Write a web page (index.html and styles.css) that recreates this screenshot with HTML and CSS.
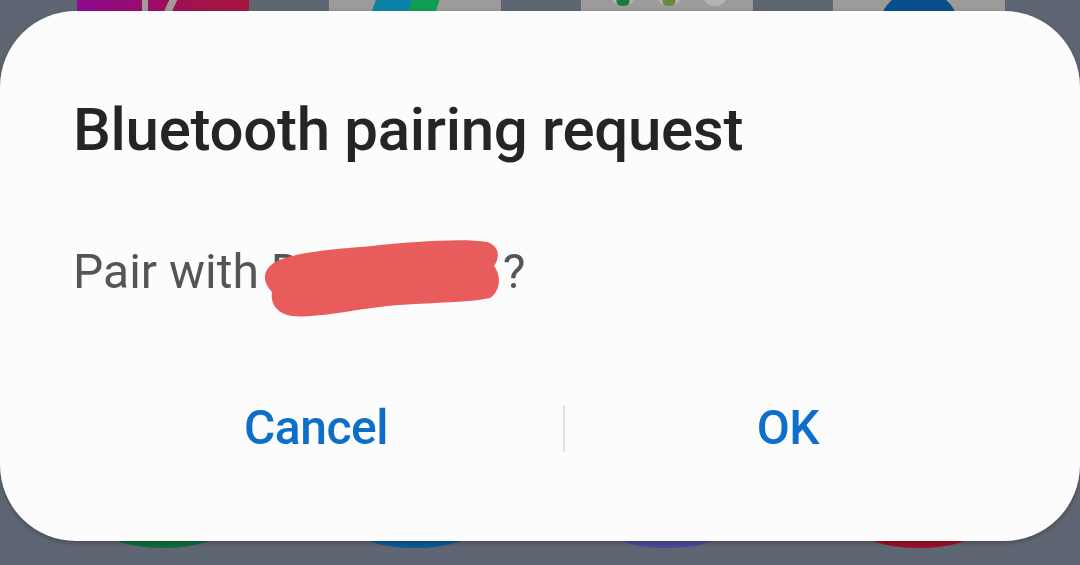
FILE: index.html
```html
<!DOCTYPE html>
<html lang="en">
<head>
    <meta charset="UTF-8">
    <meta name="viewport" content="width=device-width, initial-scale=1.0">
    <title>Bluetooth pairing request</title>
    <link rel="stylesheet" href="styles.css">
</head>
<body>
    <!-- Home screen behind the dialog -->
    <div class="home">
        <div class="dock-top">
            <div class="tile tile-store"><span class="glyph g1"></span><span class="glyph g2"></span></div>
            <div class="tile tile-play"></div>
            <div class="tile tile-folder">
                <span class="dot dot-green"></span>
                <span class="dot dot-mix"></span>
                <span class="dot"></span>
            </div>
            <div class="tile tile-blue"></div>
        </div>
        <div class="dock-bottom">
            <span class="app green"></span>
            <span class="app blue"></span>
            <span class="app purple"></span>
            <span class="app red"></span>
        </div>
    </div>

    <div class="dialog">
        <h2 class="dialog-title">Bluetooth pairing request</h2>
        <p class="dialog-message">Pair with <span class="device">D<svg class="redact" width="238" height="82" viewBox="0 0 238 82"><path d="M8 30 C20 18 60 14 110 10 C150 6 200 2 225 6 C238 10 238 22 232 30 C240 40 238 56 228 62 C200 68 150 66 110 72 C80 76 50 82 30 80 C14 78 8 66 10 56 C2 48 0 38 8 30 Z" fill="#e95c5c"/></svg></span>?</p>
        <div class="dialog-buttons">
            <button class="btn">Cancel</button>
            <span class="divider"></span>
            <button class="btn">OK</button>
        </div>
    </div>
</body>
</html>
```

FILE: styles.css
```css
body {
    margin: 0;
    padding: 0;
    height: 565px;
    overflow: hidden;
    background: #5e6673;
    font-family: 'Roboto', 'Liberation Sans', sans-serif;
}
.home {
    position: fixed;
    top: 0;
    left: 0;
    width: 100%;
    height: 100%;
    display: flex;
    flex-direction: column;
    justify-content: space-between;
}
.dock-top {
    display: flex;
    gap: 80px;
    padding-left: 77px;
    height: 14px;
}
.tile {
    width: 172px;
    height: 14px;
    background: #9d9b9a;
    display: flex;
    align-items: flex-start;
    overflow: hidden;
}
.tile-store {
    background: linear-gradient(90deg, #8c0a8f 0%, #9a0d6a 40%, #a1114f 65%, #a5173d 100%);
    gap: 18px;
    padding-left: 65px;
    box-sizing: border-box;
}
.glyph {
    display: block;
    width: 6px;
    height: 14px;
    background: #a39a9e;
}
.g2 {
    transform: skewX(-25deg);
    width: 8px;
}
.tile-play {
    background: linear-gradient(110deg, #9d9b9a 0 44px, #0b83a6 44px 78px, #0f9f52 78px 104px, #9d9b9a 104px);
}
.tile-folder {
    gap: 20px;
    padding-left: 29px;
    box-sizing: border-box;
}
.dot {
    display: block;
    width: 26px;
    height: 26px;
    margin-top: -20px;
    border-radius: 50%;
    background: #b4b3b2;
}
.dot-green {
    background: radial-gradient(circle at 50% 80%, #1f7a3e 0 6px, #b4b3b2 7px);
}
.dot-mix {
    background: radial-gradient(circle at 50% 80%, #6a8a3a 0 6px, #b4b3b2 7px);
}
.tile-blue {
    background: radial-gradient(circle at 86px 30px, #0a4f8c 0 40px, #9d9b9a 41px);
}
.dock-bottom {
    display: flex;
    gap: 132px;
    padding-left: 103px;
    margin-bottom: 17px;
}
.app {
    display: block;
    width: 120px;
    height: 40px;
    border-radius: 50%;
}
.green { background: #0f6c3d; }
.blue { background: #0d5a97; }
.purple { background: #4b4a99; }
.red { background: #9e0f2b; }

/* Dialog */
.dialog {
    position: relative;
    z-index: 1;
    margin-top: 11px;
    height: 530px;
    box-sizing: border-box;
    padding: 83px 69px 0 73px;
    background: #fcfcfc;
    border-radius: 76px;
    box-shadow: 0 2px 5px rgba(0, 0, 0, 0.25);
}
.dialog-title {
    margin: 0;
    font-size: 60px;
    line-height: 72px;
    font-weight: 500;
    color: #252525;
    letter-spacing: -0.3px;
}
.dialog-message {
    margin: 78px 0 0;
    font-size: 48px;
    line-height: 56px;
    color: #555555;
}
.device {
    position: relative;
    display: inline-block;
    width: 232px;
}
.redact {
    position: absolute;
    left: -9px;
    top: -8px;
}
.dialog-buttons {
    margin-top: 100px;
    margin-left: -4px;
    display: grid;
    grid-template-columns: 494px 2px 1fr;
    align-items: center;
    height: 56px;
}
.btn {
    background: none;
    border: none;
    padding: 0;
    font-family: 'Roboto', 'Liberation Sans', sans-serif;
    font-size: 48px;
    line-height: 56px;
    font-weight: 500;
    color: #0e6fcb;
    letter-spacing: -0.5px;
}
.divider {
    width: 2px;
    height: 47px;
    background: #e2e2e2;
}
```
